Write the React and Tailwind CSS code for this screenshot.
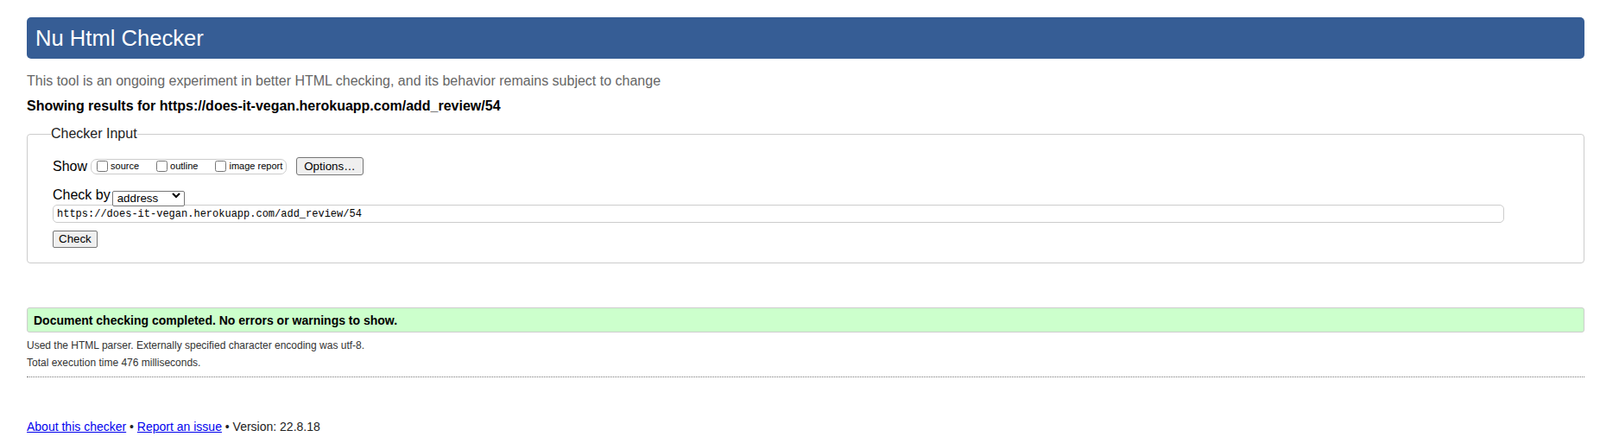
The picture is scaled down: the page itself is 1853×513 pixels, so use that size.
import React from 'react';

const ShowOption = ({ label }) => (
    <label className="flex items-center">
        <input type="checkbox" className="m-0 mr-[3px] h-[13px] w-[13px]" />
        <span className="text-[11px] leading-[13px]">{label}</span>
    </label>
);

const App = () => {
    return (
        <div className="min-h-screen bg-white pl-[31px] pr-[18px] pt-[20px] font-['Liberation_Sans',Arial,sans-serif] text-[#222]">
            <h1 className="flex h-[48px] items-center rounded-[5px] bg-[#365d95] pl-[10px] text-[25.6px] font-normal leading-[30px] text-white">Nu Html Checker</h1>

            <p className="mt-[17px] text-[16px] leading-[18px] text-[#666]">This tool is an ongoing experiment in better HTML checking, and its behavior remains subject to change</p>
            <p className="mt-[11px] text-[16px] font-bold leading-[18px] text-black">Showing results for https://does-it-vegan.herokuapp.com/add_review/54</p>

            <fieldset className="mt-[14px] rounded-[4px] border border-[#ccc] pb-[17px] pl-[27px] pr-[92px]">
                <legend className="text-[16px] leading-[18px] text-[#222]">Checker Input</legend>
                <div className="pl-[2px]">
                    <div className="mt-[18px] flex h-[21px] items-center">
                        <span className="text-[16px] leading-[18px] text-black">Show</span>
                        <span className="ml-[4px] flex h-[18px] items-center gap-[20px] rounded-[7px] border border-[#ccc] pl-[6px] pr-[4px] text-black">
                            <ShowOption label="source" />
                            <ShowOption label="outline" />
                            <ShowOption label="image report" />
                        </span>
                        <button type="button" className="ml-[11px] h-[21px] rounded-[3px] border border-[#767676] bg-[#efefef] px-[8px] text-[13.33px] leading-[16px] text-black">Options…</button>
                    </div>

                    <div className="mt-[14px] flex h-[18px] items-center">
                        <span className="text-[16px] leading-[18px] text-black">Check by</span>
                        <div className="relative ml-[2px] h-[18px] w-[84px]">
                            <select className="h-full w-full appearance-none rounded-[2px] border border-[#767676] bg-white pl-[5px] text-[13.33px] leading-[16px] text-black">
                                <option>address</option>
                            </select>
                            <svg className="pointer-events-none absolute right-[5px] top-[6px]" width="10" height="7" viewBox="0 0 10 7" fill="none">
                                <polyline points="1,1 5,5 9,1" stroke="#000" strokeWidth="2" />
                            </svg>
                        </div>
                    </div>

                    <input
                        type="text"
                        readOnly
                        value="https://does-it-vegan.herokuapp.com/add_review/54"
                        className="mt-[2px] block h-[21px] w-full rounded-[5px] border border-[#ccc] pl-[4px] font-['Liberation_Mono',monospace] text-[12px] text-black"
                    />

                    <button type="button" className="mt-[9px] block h-[20px] rounded-[2px] border border-[#767676] bg-[#efefef] px-[6px] text-[13.33px] leading-[16px] text-black">Check</button>
                </div>
            </fieldset>

            <div className="mt-[51px] flex h-[29px] items-center rounded-[3px] border border-[#ccc] bg-[#ccffcc] pl-[7px]">
                <p className="text-[14px] font-bold leading-[16px] text-black">Document checking completed. No errors or warnings to show.</p>
            </div>

            <div className="mt-[5px] text-[12px] leading-[20px] text-[#333]">
                <p>Used the HTML parser. Externally specified character encoding was utf-8.</p>
                <p>Total execution time 476 milliseconds.</p>
            </div>
            <div className="mt-[6px] border-t border-dotted border-[#777]" />

            <p className="mt-[49px] pb-[4px] text-[14px] leading-[16px] text-[#222]">
                <a href="#" className="text-[#0000ee] underline">About this checker</a>
                {' • '}
                <a href="#" className="text-[#0000ee] underline">Report an issue</a>
                {' • Version: 22.8.18'}
            </p>
        </div>
    );
};

export default App;
